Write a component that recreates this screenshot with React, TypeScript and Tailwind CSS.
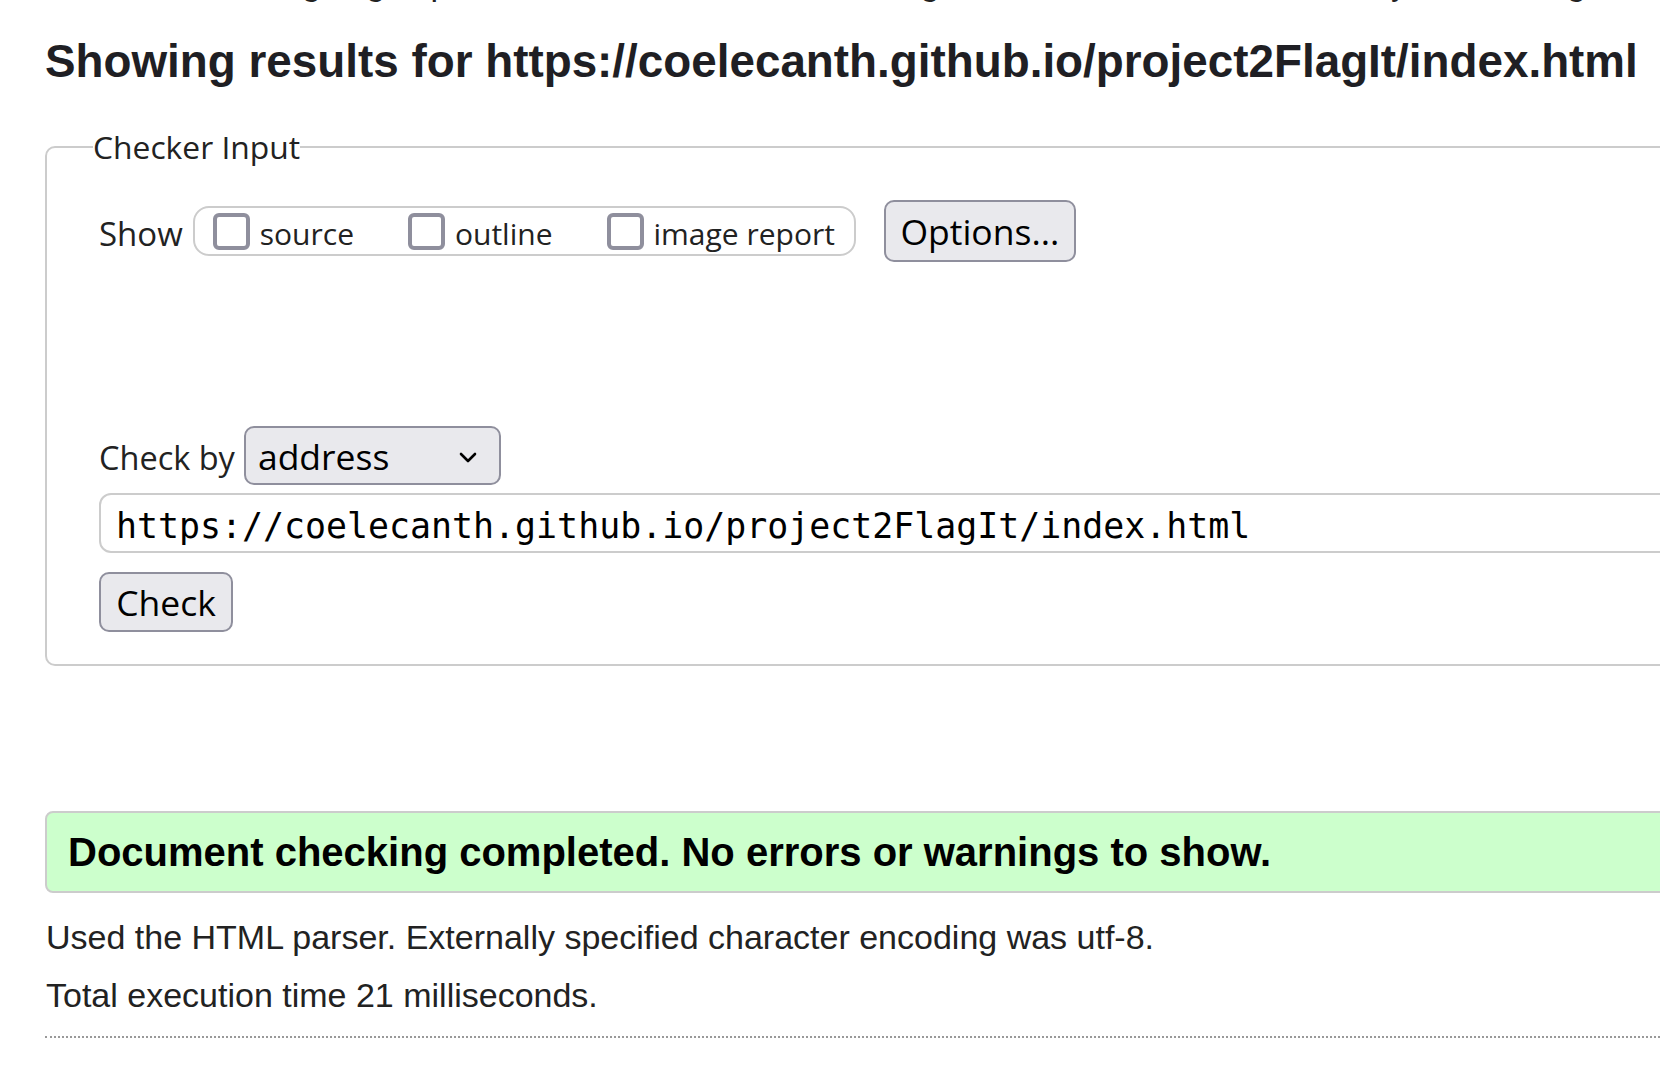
import React from "react";

const url = "https://coelecanth.github.io/project2FlagIt/index.html";

function Checkbox({ label }: { label: string }) {
  return (
    <label className="flex items-center">
      <span className="block w-[37px] h-[37px] border-[4px] border-[#8f8f9d] rounded-[6px] bg-white" />
      <span className="ml-[10px] mt-[6px] text-[30px] leading-[40px] text-[#222]">{label}</span>
    </label>
  );
}

export default function App() {
  return (
    <div className="h-[1065px] w-full overflow-hidden bg-white text-[#222] font-['Liberation_Sans',Arial,sans-serif]">
      <div className="w-[1760px] pl-[45px]">
        <p className="-mt-[36px] whitespace-nowrap text-[34px] leading-[39px]">
          This tool is an ongoing experiment in better HTML checking, and its behavior remains subject to change
        </p>
        <h2 className="mt-[36px] whitespace-nowrap text-[45.8px] leading-[46px] font-bold text-[#1f1f24]">
          Showing results for {url}
        </h2>

        <fieldset className="mt-[45px] border-2 border-[#cccccc] rounded-[10px] font-['Open_Sans',sans-serif]">
          <legend className="ml-[46px] text-[31.8px] leading-[34px] text-[#222]">Checker Input</legend>
          <div className="pl-[52px] pt-[36px] pb-[32px]">
            <div className="flex items-center h-[62px]">
              <span className="mt-[6px] text-[33px] leading-[44px] text-[#222]">Show</span>
              <div className="ml-[10px] flex items-center h-[50px] border-2 border-[#cccccc] rounded-[16px] pl-[18px] pr-[19px] gap-[54px]">
                <Checkbox label="source" />
                <Checkbox label="outline" />
                <Checkbox label="image report" />
              </div>
              <button className="ml-[28px] w-[192px] h-[62px] border-2 border-[#8f8f9d] rounded-[10px] bg-[#e9e9ed] text-[35.5px] leading-[44px] text-black">
                Options...
              </button>
            </div>

            <div className="mt-[164px] flex items-center h-[59px]">
              <span className="mt-[4px] text-[32.5px] leading-[44px] text-[#222]">Check by</span>
              <div className="ml-[9px] w-[257px] h-[59px] border-2 border-[#8f8f9d] rounded-[10px] bg-[#e9e9ed] flex items-center justify-between pl-[12px] pr-[22px]">
                <span className="text-[35.5px] leading-[44px] text-black">address</span>
                <svg width="18" height="12" viewBox="0 0 18 12" className="mt-[2px]">
                  <polyline points="2,3 9,10 16,3" fill="none" stroke="#000" strokeWidth="2.6" strokeLinecap="round" strokeLinejoin="round" />
                </svg>
              </div>
            </div>

            <div className="mt-[8px] h-[60px] border-2 border-[#cccccc] rounded-[12px] bg-white flex items-center pl-[15px]">
              <span className="mt-[6px] font-['DejaVu_Sans_Mono',monospace] text-[34.9px] leading-[44px] text-black whitespace-nowrap">
                {url}
              </span>
            </div>

            <button className="mt-[19px] block w-[134px] h-[60px] border-2 border-[#8f8f9d] rounded-[10px] bg-[#e9e9ed] text-[35.5px] leading-[44px] text-black">
              Check
            </button>
          </div>
        </fieldset>

        <div className="mt-[145px] border-2 border-[#cccccc] rounded-[8px] bg-[#ccffcc] px-[21px] py-[16px]">
          <p className="text-[40px] leading-[46px] font-bold text-black whitespace-nowrap">
            Document checking completed. No errors or warnings to show.
          </p>
        </div>

        <p className="mt-[25px] ml-[1px] text-[34px] leading-[39px] whitespace-nowrap">
          Used the HTML parser. Externally specified character encoding was utf-8.
        </p>
        <p className="mt-[19px] ml-[1px] text-[34px] leading-[39px] whitespace-nowrap">Total execution time 21 milliseconds.</p>
        <div className="mt-[21px] border-t-2 border-dotted border-[#999999]" />
      </div>
    </div>
  );
}
